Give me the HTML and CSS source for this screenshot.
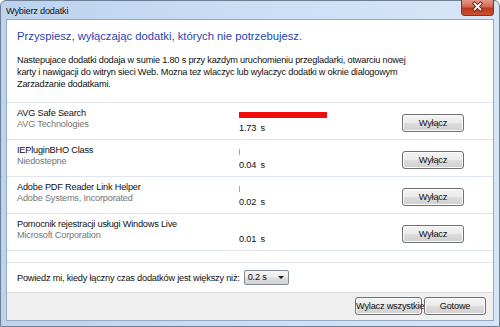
FILE: index.html
```html
<!DOCTYPE html>
<html lang="pl">
<head>
<meta charset="utf-8">
<title>Wybierz dodatki</title>
<link rel="stylesheet" href="styles.css">
</head>
<body>
<div class="window">
  <div class="titlebar">
    <span class="title">Wybierz dodatki</span>
    <div class="close">
      <svg width="33" height="16" viewBox="0 0 33 16">
        <path d="M13.5 4.5 L19.5 10.5 M19.5 4.5 L13.5 10.5" stroke="#5e1d12" stroke-width="3.6" stroke-linecap="square" fill="none"/>
        <path d="M13.5 4.5 L19.5 10.5 M19.5 4.5 L13.5 10.5" stroke="#ffffff" stroke-width="1.8" stroke-linecap="square" fill="none"/>
      </svg>
    </div>
  </div>
  <div class="client">
    <div class="intro">
      <h1 class="heading">Przyspiesz, wyłączając dodatki, których nie potrzebujesz.</h1>
      <p class="desc">Nastepujace dodatki dodaja w sumie 1.80 s przy kazdym uruchomieniu przegladarki, otwarciu nowej<br>karty i nawigacji do witryn sieci Web. Mozna tez wlaczyc lub wylaczyc dodatki w oknie dialogowym<br>Zarzadzanie dodatkami.</p>
    </div>
    <div class="list">
      <div class="row">
        <div class="info"><div class="name">AVG Safe Search</div><div class="company">AVG Technologies</div></div>
        <div class="timing"><div class="bar-track"><div class="bar" style="width:88px"></div></div><div class="time">1.73 s</div></div>
        <div class="action"><button class="btn">Wyłącz</button></div>
      </div>
      <div class="row">
        <div class="info"><div class="name">IEPluginBHO Class</div><div class="company">Niedostepne</div></div>
        <div class="timing"><div class="bar-track"><div class="tick"></div></div><div class="time">0.04 s</div></div>
        <div class="action"><button class="btn">Wyłącz</button></div>
      </div>
      <div class="row">
        <div class="info"><div class="name">Adobe PDF Reader Link Helper</div><div class="company">Adobe Systems, Incorporated</div></div>
        <div class="timing"><div class="bar-track"><div class="tick"></div></div><div class="time">0.02 s</div></div>
        <div class="action"><button class="btn">Wyłącz</button></div>
      </div>
      <div class="row">
        <div class="info"><div class="name">Pomocnik rejestracji usługi Windows Live</div><div class="company">Microsoft Corporation</div></div>
        <div class="timing"><div class="bar-track"></div><div class="time">0.01 s</div></div>
        <div class="action"><button class="btn">Wyłacz</button></div>
      </div>
    </div>
    <div class="spacer"></div>
    <div class="settings">
      <span class="label">Powiedz mi, kiedy łączny czas dodatków jest większy niż:</span>
      <div class="combo"><span>0.2 s</span><span class="arrow"></span></div>
    </div>
    <div class="footer">
      <button class="btn btn-wide">Wylacz wszystkie</button>
      <button class="btn">Gotowe</button>
    </div>
  </div>
</div>
</body>
</html>
```
FILE: styles.css
```css
* { box-sizing: border-box; }
html, body { margin: 0; padding: 0; background: #ffffff; }
body {
  width: 500px;
  height: 327px;
  overflow: hidden;
  font-family: "Liberation Sans", Arial, sans-serif;
  font-size: 9.2px;
  letter-spacing: -0.2px;
  color: #0f0f0f;
}
.window {
  position: relative;
  width: 500px;
  height: 327px;
  border: 1px solid #6f7f93;
  border-radius: 6px 6px 0 0;
  background: linear-gradient(to right, #bcd3ee, #cde0f5 60%, #d6e6f7);
  padding: 0 5px 5px 5px;
  display: flex;
  flex-direction: column;
}
.titlebar {
  height: 18px;
  padding: 2px 0 0 0;
  line-height: 17px;
}
.title { color: #111111; }
.close {
  position: absolute;
  top: -1px;
  right: 5px;
  width: 33px;
  height: 16px;
  border: 1px solid #83301f;
  border-top: none;
  border-radius: 0 0 4px 4px;
  background: linear-gradient(#e4988a 0%, #d4684f 45%, #bf3820 55%, #cb4f33 100%);
}
.close svg { display: block; margin: -1px 0 0 -1px; }
.client {
  flex: 1;
  border: 1px solid #95a9c3;
  background: #ffffff;
  display: flex;
  flex-direction: column;
}
.intro {
  height: 82px;
  padding: 8px 0 0 10px;
}
.heading {
  margin: 0;
  font-weight: normal;
  font-size: 11.25px;
  letter-spacing: 0;
  line-height: 16px;
  color: #1f45ae;
}
.desc {
  margin: 10px 0 0 0;
  line-height: 12px;
}
.row {
  height: 37px;
  border-top: 1px solid #dfe6ef;
  padding-left: 10px;
  display: grid;
  grid-template-columns: 222px 163px 62px;
}
.info { padding-top: 5px; line-height: 11px; }
.company { color: #767676; }
.timing { padding-top: 9px; }
.bar-track { height: 6px; display: flex; }
.bar { height: 6px; background: #f40d0d; }
.tick { width: 1px; height: 6px; background: #a9a9a9; }
.time { margin-top: 5px; line-height: 11px; word-spacing: 2px; }
.action { padding-top: 11px; }
.btn {
  width: 62px;
  height: 18px;
  padding: 0;
  margin: 0;
  border: 1px solid #707070;
  border-radius: 3px;
  background: linear-gradient(#f3f3f3 0%, #ebebeb 48%, #dddddd 52%, #cfcfcf 100%);
  box-shadow: inset 0 0 0 1px #fbfbfb;
  font-family: "Liberation Sans", Arial, sans-serif;
  font-size: 9.2px;
  letter-spacing: -0.2px;
  color: #111111;
  white-space: nowrap;
  text-align: center;
  line-height: 15px;
}
.btn-wide { width: 67px; }
.spacer {
  height: 12px;
  border-top: 1px solid #dfe6ef;
}
.settings {
  height: 30px;
  border-top: 1px solid #dfe6ef;
  padding-left: 10px;
  display: flex;
  align-items: center;
  gap: 4px;
}
.combo {
  width: 45px;
  height: 15px;
  border: 1px solid #7f8a96;
  border-radius: 2px;
  background: linear-gradient(#f5f5f5 0%, #ececec 48%, #dedede 52%, #d4d4d4 100%);
  display: flex;
  align-items: center;
  justify-content: space-between;
  padding: 0 4px 0 3px;
  line-height: 13px;
}
.arrow {
  width: 0;
  height: 0;
  border-left: 3px solid transparent;
  border-right: 3px solid transparent;
  border-top: 3px solid #1b1b1b;
}
.footer {
  flex: 1;
  background: #f0f0f0;
  border-top: 1px solid #dfdfdf;
  padding: 4px 7px 0 0;
  display: flex;
  justify-content: flex-end;
  align-items: flex-start;
  gap: 2px;
}
```
